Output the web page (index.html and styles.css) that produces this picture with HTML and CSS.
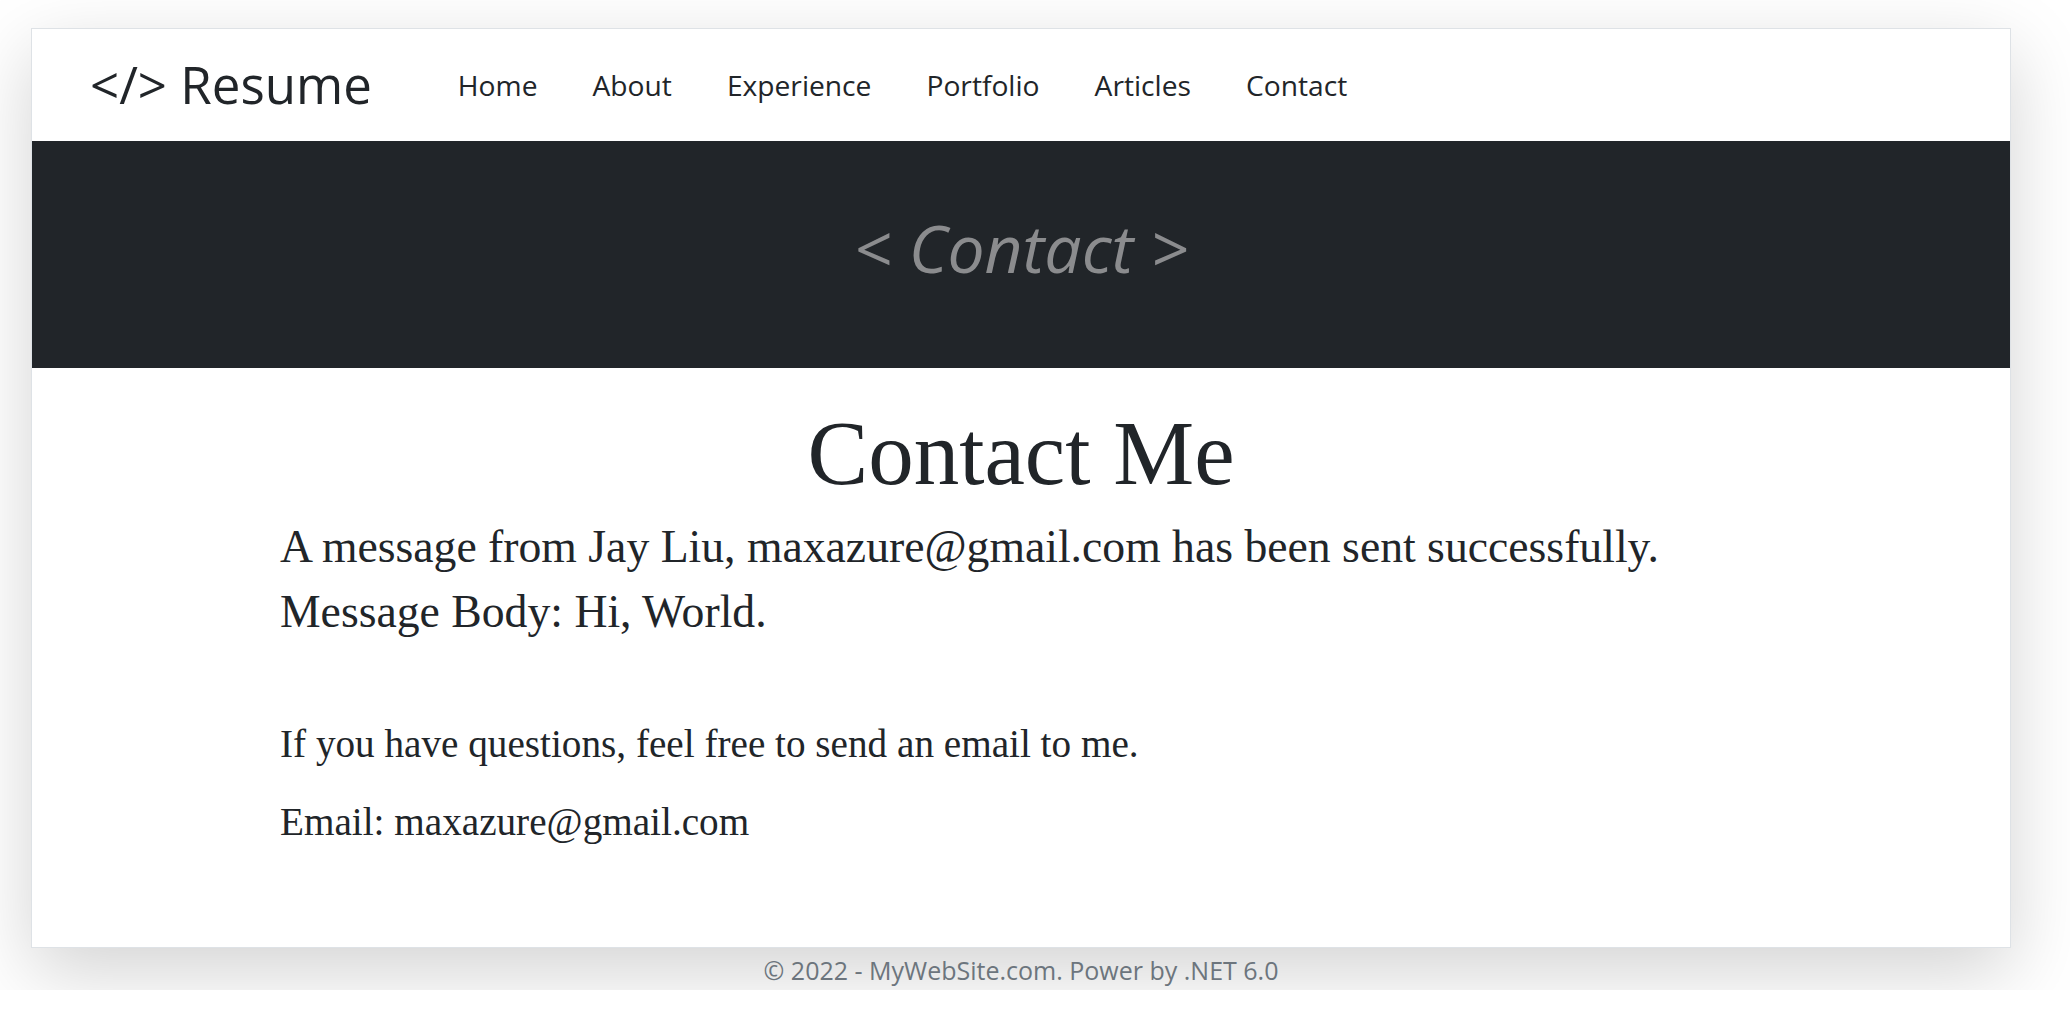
FILE: index.html
```html
<!DOCTYPE html>
<html lang="en">
<head>
<meta charset="utf-8">
<title>Contact - Resume</title>
<link rel="stylesheet" href="styles.css">
</head>
<body>
<div class="page">
  <div class="card">
    <header class="navbar">
      <a class="brand" href="#">&lt;/&gt; Resume</a>
      <nav class="nav">
        <a class="nav-link" href="#">Home</a>
        <a class="nav-link" href="#">About</a>
        <a class="nav-link" href="#">Experience</a>
        <a class="nav-link" href="#">Portfolio</a>
        <a class="nav-link" href="#">Articles</a>
        <a class="nav-link" href="#">Contact</a>
      </nav>
    </header>
    <section class="banner">
      <h1 class="banner-title">&lt; Contact &gt;</h1>
    </section>
    <main class="content">
      <h1 class="title">Contact Me</h1>
      <h3 class="msg">A message from Jay Liu, maxazure@gmail.com has been sent successfully.</h3>
      <h3 class="msg">Message Body: Hi, World.</h3>
      <p class="info first">If you have questions, feel free to send an email to me.</p>
      <p class="info">Email: maxazure@gmail.com</p>
    </main>
  </div>
  <footer class="footer">&copy; 2022 - MyWebSite.com. Power by .NET 6.0</footer>
</div>
</body>
</html>
```
FILE: styles.css
```css
html, body {
  margin: 0;
  padding: 0;
  background: #ffffff;
}

body {
  font-family: "Open Sans", "Noto Sans", sans-serif;
  color: #212529;
}

.page {
  width: 1980px;
  margin: 28px 0 0 31px;
}

.card {
  background: #ffffff;
  border: 1px solid #dee2e6;
  box-shadow: 0 24px 72px rgba(0, 0, 0, 0.175);
  display: flex;
  flex-direction: column;
}

.navbar {
  height: 112px;
  display: flex;
  align-items: center;
  padding: 0 0 0 58px;
}

.brand {
  font-size: 51px;
  line-height: 1.45;
  color: #212529;
  text-decoration: none;
  margin-right: 86px;
}

.nav {
  display: flex;
  align-items: center;
  gap: 55px;
}

.nav-link {
  font-size: 28.2px;
  line-height: 1.5;
  color: #212529;
  text-decoration: none;
}

.banner {
  background: #212529;
  height: 227px;
  box-sizing: border-box;
  padding-top: 67px;
  text-align: center;
}

.banner-title {
  margin: 0;
  font-family: "Open Sans", "Noto Sans", sans-serif;
  font-style: italic;
  font-weight: 400;
  font-size: 66px;
  line-height: 1.2;
  color: #8b8c8e;
}

.content {
  padding: 31px 248px 77px 248px;
  font-family: "Liberation Serif", "Times New Roman", serif;
}

.title {
  margin: 0 0 12px 0;
  text-align: center;
  font-weight: 400;
  font-size: 91px;
  line-height: 1.2;
  color: #212529;
}

.msg {
  margin: 0 0 10px 0;
  font-weight: 400;
  font-size: 45.7px;
  line-height: 1.2;
  color: #212529;
}

.info {
  margin: 0 0 19px 0;
  font-size: 39.2px;
  line-height: 1.5;
  color: #212529;
}

.info.first {
  margin-top: 75px;
}

.footer {
  margin-top: 4px;
  text-align: center;
  font-family: "Open Sans", "Noto Sans", sans-serif;
  font-size: 25px;
  line-height: 1.5;
  color: #6c757d;
}
```
